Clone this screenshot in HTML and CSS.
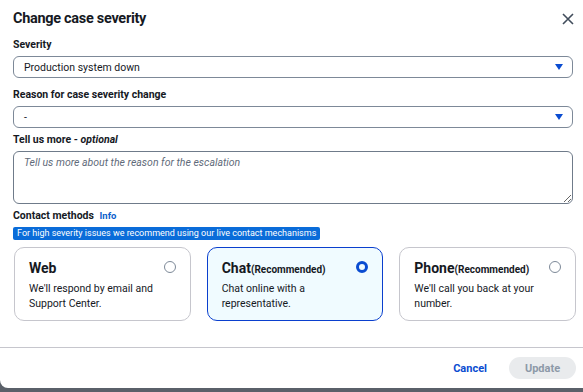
FILE: index.html
```html
<!DOCTYPE html>
<html lang="en">
<head>
    <meta charset="UTF-8">
    <meta name="viewport" content="width=device-width, initial-scale=1.0">
    <title>Change case severity</title>
    <link rel="stylesheet" href="styles.css">
</head>
<body>
    <div class="modal">
        <div class="modal-header">
            <h1>Change case severity</h1>
            <button class="close-button" title="Close">
                <svg width="12" height="12" viewBox="0 0 12 12"><path d="M1 1 L11 11 M11 1 L1 11" stroke="#414d5c" stroke-width="1.6" fill="none"/></svg>
            </button>
        </div>

        <div class="modal-body">
            <div class="field">
                <label class="field-label">Severity</label>
                <div class="select">
                    <span>Production system down</span>
                    <span class="caret"></span>
                </div>
            </div>

            <div class="field">
                <label class="field-label">Reason for case severity change</label>
                <div class="select">
                    <span>-</span>
                    <span class="caret"></span>
                </div>
            </div>

            <div class="field field-tight">
                <label class="field-label">Tell us more - <i>optional</i></label>
                <textarea class="textarea" placeholder="Tell us more about the reason for the escalation"></textarea>
            </div>

            <div class="field field-tight">
                <div class="field-label">Contact methods <a href="#" class="info-link">Info</a></div>
                <div class="notice">For high severity issues we recommend using our live contact mechanisms</div>
                <div class="tiles">
                    <div class="tile">
                        <div class="tile-top">
                            <span class="tile-title">Web</span>
                            <span class="radio"></span>
                        </div>
                        <p>We'll respond by email and Support Center.</p>
                    </div>
                    <div class="tile selected">
                        <div class="tile-top">
                            <span class="tile-title">Chat<small>(Recommended)</small></span>
                            <span class="radio"></span>
                        </div>
                        <p>Chat online with a representative.</p>
                    </div>
                    <div class="tile">
                        <div class="tile-top">
                            <span class="tile-title">Phone<small>(Recommended)</small></span>
                            <span class="radio"></span>
                        </div>
                        <p>We'll call you back at your number.</p>
                    </div>
                </div>
            </div>
        </div>

        <div class="modal-footer">
            <a href="#" class="cancel-link">Cancel</a>
            <button class="update-button" disabled>Update</button>
        </div>
    </div>
</body>
</html>
```

FILE: styles.css
```css
* {
    margin: 0;
    padding: 0;
    box-sizing: border-box;
}

body {
    font-family: 'Roboto', 'Liberation Sans', sans-serif;
    background: #5a6069;
    color: #16191f;
    height: 392px;
    overflow: hidden;
}

.modal {
    background: white;
    height: 388px;
    border-radius: 0 0 0 8px;
    display: flex;
    flex-direction: column;
}

.modal-header {
    display: flex;
    align-items: center;
    justify-content: space-between;
    padding: 3px 8px 0 13px;
    height: 34px;
}

.modal-header h1 {
    font-size: 14.5px;
    font-weight: bold;
    letter-spacing: -0.3px;
}

.close-button {
    background: none;
    border: none;
    width: 14px;
    height: 16px;
    display: flex;
    align-items: center;
    justify-content: center;
    cursor: pointer;
}

.modal-body {
    padding: 4px 10px 0 13px;
    display: flex;
    flex-direction: column;
    gap: 10px;
}

.field {
    display: flex;
    flex-direction: column;
}

.field-tight {
    margin-top: -5px;
}

.field-label {
    font-size: 10.5px;
    font-weight: bold;
    line-height: 14px;
    margin-bottom: 4px;
}

.field-label i {
    font-weight: bold;
}

.info-link {
    color: #0a5fcc;
    font-size: 9.5px;
    text-decoration: none;
    margin-left: 3px;
}

.select {
    height: 22px;
    border: 1px solid #7d8998;
    border-radius: 6px;
    display: flex;
    align-items: center;
    justify-content: space-between;
    padding: 0 9px 0 10px;
    font-size: 10.5px;
}

.caret {
    width: 0;
    height: 0;
    border-left: 4px solid transparent;
    border-right: 4px solid transparent;
    border-top: 6px solid #0a4cd1;
}

.textarea {
    height: 53px;
    border: 1px solid #6f7b8a;
    border-radius: 6px;
    padding: 4px 10px;
    font-family: inherit;
    font-size: 10.5px;
    resize: vertical;
}

.textarea::placeholder {
    color: #5f6b7a;
    font-style: italic;
}

.notice {
    align-self: flex-start;
    background: #0a6cd9;
    color: white;
    font-size: 9px;
    line-height: 13px;
    padding: 0 4px;
    border-radius: 2px;
    margin-bottom: 7px;
}

.tiles {
    display: grid;
    grid-template-columns: repeat(3, 1fr);
    gap: 16px;
    margin: 0 -3px 0 1px;
}

.tile {
    border: 1px solid #c6c6cd;
    border-radius: 10px;
    height: 74px;
    padding: 12px 14px;
}

.tile.selected {
    border: 1.5px solid #0a3fce;
    background: #f0fbff;
}

.tile-top {
    display: flex;
    align-items: center;
    justify-content: space-between;
    margin-bottom: 5px;
}

.tile-title {
    font-size: 14px;
    font-weight: bold;
}

.tile-title small {
    font-size: 10px;
}

.radio {
    width: 12px;
    height: 12px;
    border-radius: 50%;
    border: 1.5px solid #7d8998;
    margin-top: -3px;
}

.tile.selected .radio {
    border: 3.5px solid #0a4cd1;
}

.tile p {
    font-size: 10.5px;
    line-height: 15px;
}

.modal-footer {
    margin-top: auto;
    border-top: 1px solid #c6c6cd;
    height: 41px;
    display: flex;
    align-items: center;
    justify-content: flex-end;
    gap: 22px;
    padding: 0 7px 0 0;
}

.cancel-link {
    color: #0a4cd1;
    font-size: 11px;
    font-weight: bold;
    text-decoration: none;
}

.update-button {
    background: #e9ebed;
    border: none;
    border-radius: 12px;
    color: #8d99a8;
    font-family: inherit;
    font-size: 11px;
    font-weight: bold;
    width: 67px;
    height: 22px;
}
```
